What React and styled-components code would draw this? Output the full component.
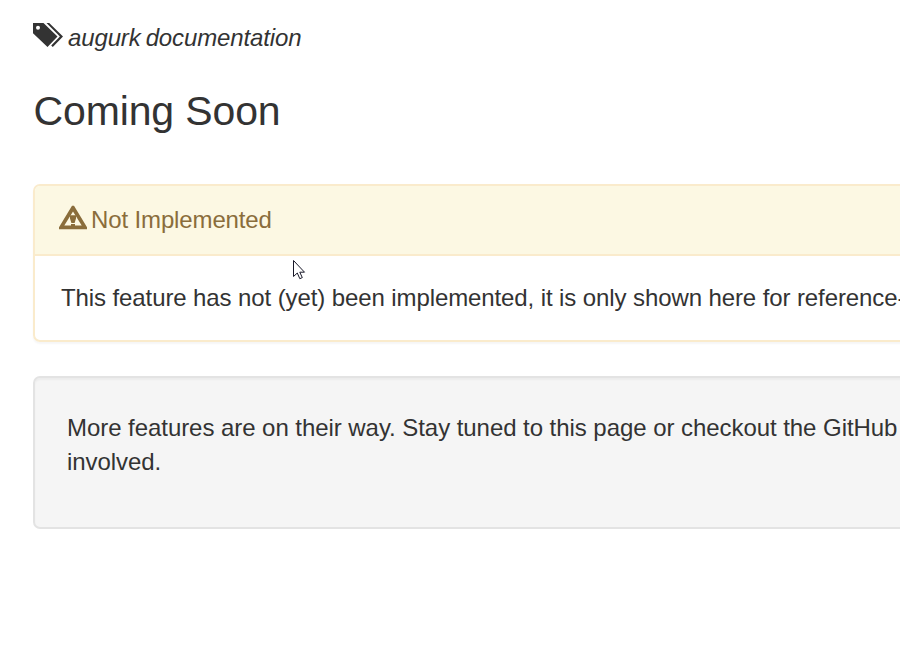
import React from "react";
import styled, { createGlobalStyle } from "styled-components";

const GlobalStyle = createGlobalStyle`
  * { box-sizing: border-box; }
  html, body { margin: 0; background: #fff; overflow: hidden; }
  body {
    font-family: "Liberation Sans", Arial, sans-serif;
    font-size: 24px;
    line-height: 34px;
    color: #333;
  }
`;

const Page = styled.main`
  position: relative;
  width: 900px;
  height: 650px;
  padding: 21px 0 0 33px;
  overflow: hidden;
`;

const Brand = styled.header`
  display: flex;
  gap: 5px;
  height: 34px;
  font-style: italic;
  white-space: nowrap;
  word-spacing: -1.5px;
`;

const TagsIcon = styled.svg`
  width: 30px;
  height: 24px;
  margin-top: 2px;
  flex: none;
`;

const Title = styled.h1`
  margin: 33px 0 0;
  padding-left: 0.5px;
  height: 46px;
  font-size: 41px;
  line-height: 46px;
  font-weight: 400;
  letter-spacing: -0.13px;
`;

const Panel = styled.section`
  width: 1200px;
  height: 158px;
  margin-top: 50px;
  border: 2px solid #faebcc;
  border-radius: 7px;
  box-shadow: 0 2px 2px rgba(0, 0, 0, 0.04);
`;

const PanelHeading = styled.div`
  display: flex;
  gap: 4px;
  height: 70px;
  padding: 17px 24px 0;
  border-bottom: 2px solid #faebcc;
  border-radius: 5px 5px 0 0;
  background: #fcf8e3;
  color: #8a6d3b;
`;

const WarningIcon = styled.svg`
  width: 28px;
  height: 25px;
  margin-top: 2px;
  flex: none;
`;

const PanelBody = styled.div`
  padding: 25px 26px;
  white-space: nowrap;
`;

const Well = styled.section`
  width: 1200px;
  height: 153px;
  margin-top: 34px;
  padding: 33px 32px;
  border: 2px solid #e3e3e3;
  border-radius: 7px;
  background: #f5f5f5;
  box-shadow: inset 0 2px 2px rgba(0, 0, 0, 0.04);
  white-space: nowrap;
`;

const Pointer = styled.svg`
  position: absolute;
  left: 293px;
  top: 260px;
  width: 13px;
  height: 20px;
`;

const Text = styled.span`
  letter-spacing: ${(p) => p.$spacing || "normal"};
`;

export default function App() {
  return (
    <>
      <GlobalStyle />
      <Page>
        <Brand>
          <TagsIcon viewBox="0 0 30 24" fill="currentColor">
            <path
              fillRule="evenodd"
              d="M0 0h10.500L24.500 13.400 14.500 24 0 10.300zM5 2.800a2 2 0 1 0 0 4 2 2 0 0 0 0-4z"
            />
            <path d="M13.500 0h2.700L30 13.400 19.800 24l-1.600-1.600 8.700-9z" />
          </TagsIcon>
          <Text $spacing="-0.13px">augurk documentation</Text>
        </Brand>
        <Title>Coming Soon</Title>
        <Panel>
          <PanelHeading>
            <WarningIcon viewBox="0 0 28 25" fill="currentColor">
              <path
                fillRule="evenodd"
                d="M13 .800h2L28 22.300V24.300H0V22.300zM14 6.500 5.300 20.600H22.700z"
              />
              <path d="M11 10.300h6v3.200l-1.400 4.500h-3.200L11 13.500zM12 19h4v2h-4z" />
            </WarningIcon>
            <Text $spacing="-0.13px">Not Implemented</Text>
          </PanelHeading>
          <PanelBody>
            <Text $spacing="-0.1px">
              This feature has not (yet) been implemented, it is only shown here for reference-
            </Text>
          </PanelBody>
        </Panel>
        <Well>
          <Text $spacing="-0.055px">
            More features are on their way. Stay tuned to this page or checkout the GitHub
          </Text>
          <br />
          <Text $spacing="-0.055px">involved.</Text>
        </Well>
        <Pointer viewBox="0 0 13 20">
          <path
            d="M.500.500V16.500L4.300 13l2.500 5.700 2.500-1.100-2.500-5.400H11.500z"
            fill="#fff"
            stroke="#181828"
          />
        </Pointer>
      </Page>
    </>
  );
}
